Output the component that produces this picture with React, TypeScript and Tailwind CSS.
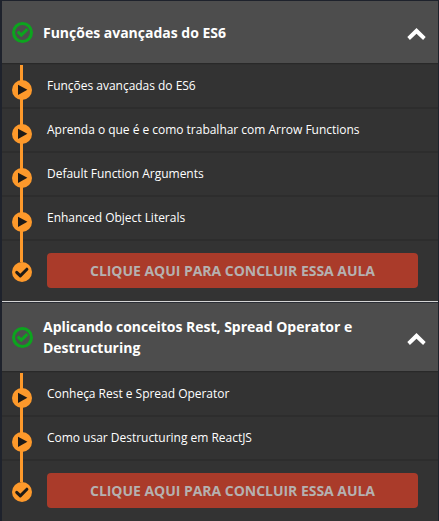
type Section = { title: string; lessons: string[]; headerClass: string; titleClass: string; footerClass: string };

const sections: Section[] = [
  {
    title: 'Funções avançadas do ES6',
    lessons: [
      'Funções avançadas do ES6',
      'Aprenda o que é e como trabalhar com Arrow Functions',
      'Default Function Arguments',
      'Enhanced Object Literals',
    ],
    headerClass: 'h-[62px]',
    titleClass: 'pt-px',
    footerClass: 'border-[#d5d5d5]',
  },
  {
    title: 'Aplicando conceitos Rest, Spread Operator e Destructuring',
    lessons: ['Conheça Rest e Spread Operator', 'Como usar Destructuring em ReactJS'],
    headerClass: 'h-[68px] border-t border-[#292c33] box-content',
    titleClass: 'pb-px',
    footerClass: 'border-[#282828]',
  },
];

function DoneIcon() {
  return (
    <svg className="h-[21px] w-[21px] shrink-0" viewBox="0 0 21 21" fill="none" stroke="#0ca41e">
      <circle cx="10.5" cy="10.5" r="8.95" strokeWidth="3.1" />
      <path d="M5.7 9.7 9.3 13.1 15.4 7.2" strokeWidth="3.1" />
    </svg>
  );
}

function ChevronUp() {
  return (
    <svg className="h-[12px] w-[19px] shrink-0" viewBox="0 0 19 12" fill="#fff">
      <path d="M9.5 0 18.7 9.1 16.1 11.9 9.5 5.7 2.9 11.9 0.3 9.1Z" />
    </svg>
  );
}

function PlayDot() {
  return (
    <svg className="h-[20px] w-[20px] shrink-0" viewBox="0 0 20 20">
      <circle cx="10" cy="10" r="10" fill="#fd992b" />
      <path d="M6 4.7 15.4 9.8 6 14.9Z" fill="#1d1a17" />
    </svg>
  );
}

function CheckDot() {
  return (
    <svg className="h-[20px] w-[20px] shrink-0" viewBox="0 0 20 20">
      <circle cx="10" cy="10" r="10" fill="#fd992b" />
      <path
        d="M4.7 10.4 8.3 13.9 14.9 7.2"
        fill="none"
        stroke="#1d1a17"
        strokeWidth="3"
        strokeLinecap="round"
        strokeLinejoin="round"
      />
    </svg>
  );
}

function CourseSection({ section }: { section: Section }) {
  return (
    <section>
      <header className={`flex items-center bg-[#4d4d4d] pl-[10px] pr-[12px] ${section.headerClass}`}>
        <DoneIcon />
        <h2
          className={`ml-[10px] w-[325px] text-[14px] font-bold leading-[21px] tracking-[-0.01px] text-white ${section.titleClass}`}
        >
          {section.title}
        </h2>
        <span className="ml-auto pt-[3px]">
          <ChevronUp />
        </span>
      </header>
      <div className="h-px bg-[#292929]" />
      <div className="h-px bg-[#303030]" />
      <div className="relative">
        <div className="absolute left-[18px] top-0 bottom-[40px] w-[3px] bg-[#fd992b]" />
        <ul className="relative">
          {section.lessons.map((lesson) => (
            <li key={lesson} className="relative flex h-[44px] items-start pl-[10px]">
              <div className="absolute bottom-0 left-0 -z-10 h-[2px] w-full bg-[#2d2d2d]" />
              <span className="pt-[15px]">
                <PlayDot />
              </span>
              <span className="ml-[15px] pt-[12px] text-[12px] leading-[18px] tracking-[-0.02px] text-white">
                {lesson}
              </span>
            </li>
          ))}
        </ul>
        <div
          className={`relative box-content flex h-[48px] items-end border-b pb-[12px] pl-[10px] pr-[20px] ${section.footerClass}`}
        >
          <span className="mb-[7px] h-[20px]">
            <CheckDot />
          </span>
          <button className="mb-px ml-[15px] h-[35px] flex-1 rounded-[4px] bg-[#aa3b2a] text-[14px] font-bold leading-[35px] tracking-[-0.03px] text-[#b5b1b0]">
            CLIQUE AQUI PARA CONCLUIR ESSA AULA
          </button>
        </div>
      </div>
    </section>
  );
}

export default function App() {
  return (
    <main className="h-[521px] w-[439px] overflow-hidden bg-[#1e222c] font-['Open_Sans',sans-serif]">
      <div className="relative z-0 ml-[2px] w-[436px] pt-px">
        <div className="absolute inset-0 top-px -z-20 bg-[#333]" />
        {sections.map((section) => (
          <CourseSection key={section.title} section={section} />
        ))}
      </div>
    </main>
  );
}
